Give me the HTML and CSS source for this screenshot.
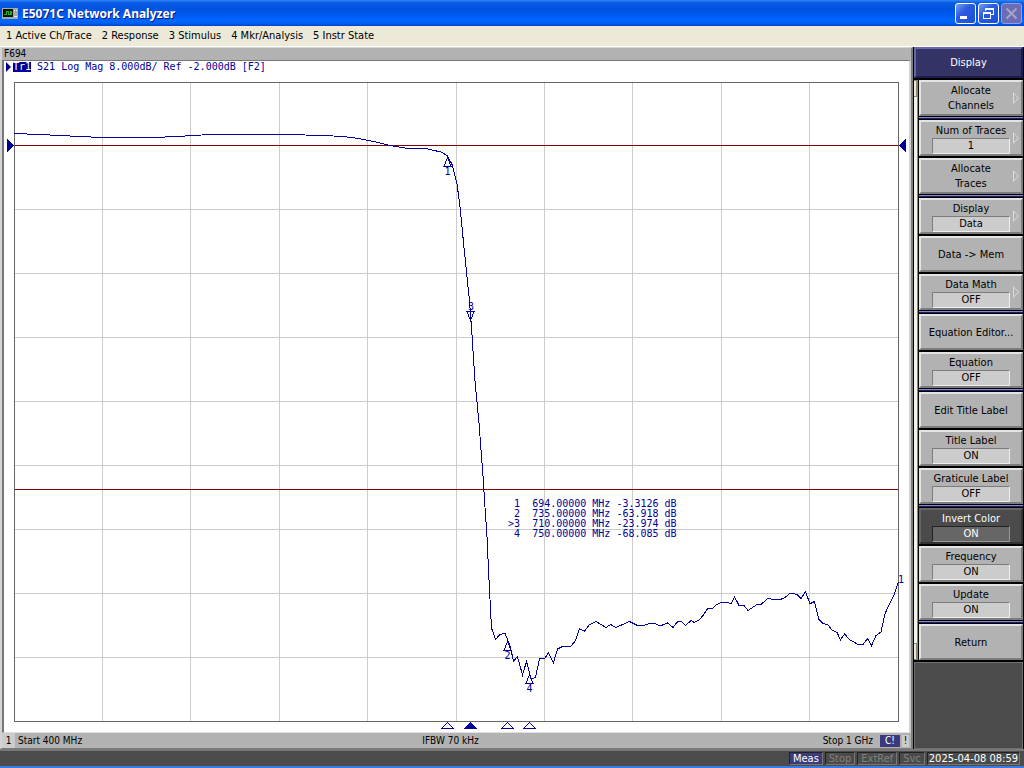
FILE: index.html
```
<!DOCTYPE html>
<html lang="en">
<head>
    <meta charset="UTF-8">
    <meta name="viewport" content="width=device-width, initial-scale=1.0">
    <title>E5071C Network Analyzer</title>
    <link rel="stylesheet" href="styles.css">
</head>
<body>
    <header class="titlebar">
        <svg class="app-icon" width="16" height="11" viewBox="0 0 16 11" shape-rendering="crispEdges">
            <rect width="16" height="11" fill="#a8a8a8"/>
            <rect x="1" y="1" width="10" height="8" fill="#001800"/>
            <path d="M2 6.500h2V3.500h2v3h2V3.500h1v3h1" fill="none" stroke="#1fae1f"/>
            <path d="M12 2.500h1M14 2.500h1M12 8.500h3" stroke="#eee"/>
        </svg>
        <h1>E5071C Network Analyzer</h1>
        <div class="window-buttons">
            <button type="button" aria-label="Minimize">
                <svg width="19" height="19" viewBox="0 0 19 19"><path d="M4 13.500h7" stroke="#fff" stroke-width="3"/></svg>
            </button>
            <button type="button" aria-label="Restore">
                <svg width="19" height="19" viewBox="0 0 19 19" fill="none" stroke="#fff" shape-rendering="crispEdges">
                    <path d="M6.500 7V4.500h8v6h-3M6 5.500h9M4.500 8.500h7v6h-7zM4 9.500h8"/>
                </svg>
            </button>
            <button type="button" aria-label="Close" disabled>
                <svg width="19" height="19" viewBox="0 0 19 19"><path d="M4.500 4.500l10 10M14.500 4.500l-10 10" stroke="#a9a3c4" stroke-width="2"/></svg>
            </button>
        </div>
    </header>

    <nav class="menubar">
        <button type="button">1 Active Ch/Trace</button>
        <button type="button">2 Response</button>
        <button type="button">3 Stimulus</button>
        <button type="button">4 Mkr/Analysis</button>
        <button type="button">5 Instr State</button>
    </nav>

    <main class="workspace">
        <section class="channel">
            <h2 class="channel-title">F694</h2>
            <div class="screen">
                <div class="trace-status">
                    <span class="arrow"></span><b>Tr1</b><span class="trace-text">S21 Log Mag 8.000dB/ Ref -2.000dB [F2]</span>
                </div>
                <div class="plot">
                    <svg class="graph" viewBox="4 73 905 659" shape-rendering="crispEdges">
                        <!-- graticule -->
                        <path class="grid" d="M102.500 83V721M190.500 83V721M279.500 83V721M367.500 83V721M456.500 83V721M544.500 83V721M632.500 83V721M721.500 83V721M809.500 83V721M15 209.500H898M15 273.500H898M15 337.500H898M15 401.500H898M15 465.500H898M15 529.500H898M15 593.500H898M15 657.500H898"/>
                        <rect class="frame" x="14.500" y="82.500" width="884" height="639"/>
                        <!-- reference and limit -->
                        <path class="level" d="M15 145.500H898M15 489.500H898"/>
                        <path class="fill" d="M7 139l7 6.500-7 6.500zM906 139l-7 6.500 7 6.500z"/>
                        <!-- S21 trace -->
                        <polyline class="trace" points="14,133.500 40,134.500 70,136 102,137.500 155,137.500 185,136 210,134.500 285,134.500 325,135.500 345,136.700 360,138.700 377,142.300 390,145.500 407,148.300 428,149 442,152.300 447.500,156 452,164.500 457,183.500 460.300,209.500 463.600,243.500 467,277 469.600,302 471.600,329 475,381 479,423 483.300,480 484.500,500 487,537 489,580 491.500,628 495.500,639.500 499.500,635 502.700,633.500 505,633.500 507.500,639.500 510.300,647 513.500,661 517.500,656.700 522.500,675 526.500,661.500 531,679 535.500,677.500 539.500,658.500 544.500,658.500 548.500,653 553.500,662.500 557.500,649 562.500,646.500 570.500,646.500 575.500,640.700 579.500,628.700 584.500,631.300 589,625 596,621.500 606,627.500 610.500,624.500 616,627.500 629.500,621.500 637.500,625.500 643.500,625.500 650,623.500 655,623.500 660,626 667.500,623 673,627.500 677.500,621.700 682,621.900 685.500,625.500 691,620.500 694.500,622.500 699,620 703.500,615 707.500,608.700 712.500,608.700 716,605 721,602.500 727.500,602.500 731,603.700 734.500,596.700 739,605.500 744,605.500 748,610.500 757,604.500 760.500,605 767.500,598.500 774,599.500 780.500,599.500 784.500,597.700 790,593.500 794.500,593.700 797,594.700 801,598.500 805.500,591.700 810,603.700 814.500,601.500 819,619.700 823,623.500 828,624.700 832,630 837,632.500 840.500,639.700 844.500,634 849.500,639.500 858,644.500 863,644.500 867.500,638.500 871.500,645.700 876,635.500 881,632 885,613.700 889.500,604 894,594.700 898.500,582"/>
                        <!-- markers -->
                        <path class="marker" d="M447.500 157.500l-3.500 9h7zM507.500 641.500l-3.500 9h7zM529.500 674.500l-3.500 9h7zM470.500 320.500l-3.500-9h7z"/>
                        <path class="marker" d="M441.500 728.500h12l-6-6zM501.500 728.500h12l-6-6zM523.500 728.500h12l-6-6z"/>
                        <path class="fill" d="M463.500 729h14l-7-7z"/>
                        <g class="marker-label">
                            <text x="447.500" y="175">1</text>
                            <text x="507.500" y="659">2</text>
                            <text x="471" y="310">3</text>
                            <text x="529.500" y="692">4</text>
                            <text x="901" y="583">1</text>
                        </g>
                    </svg>
                    <table class="marker-table">
                        <tr><td>&nbsp;1</td><td>694.00000 MHz</td><td>-3.3126 dB</td></tr>
                        <tr><td>&nbsp;2</td><td>735.00000 MHz</td><td>-63.918 dB</td></tr>
                        <tr><td>&gt;3</td><td>710.00000 MHz</td><td>-23.974 dB</td></tr>
                        <tr><td>&nbsp;4</td><td>750.00000 MHz</td><td>-68.085 dB</td></tr>
                    </table>
                </div>
            </div>
            <footer class="channel-footer">
                <span class="channel-no">1</span>
                <span class="start">Start 400 MHz</span>
                <span class="ifbw">IFBW 70 kHz</span>
                <span class="stop">Stop 1 GHz</span>
                <span class="flag flag-on">C!</span>
                <span class="flag">!</span>
            </footer>
        </section>

        <aside class="softkeys">
            <h2>Display</h2>
            <div class="keys">
                <div class="scroller"><span></span><span></span></div>
                <div class="key-list">
                    <div class="key-group">
                        <button type="button" class="more">Allocate<br>Channels</button>
                    </div>
                    <div class="key-group">
                        <button type="button" class="more">Num of Traces<output>1</output></button>
                        <button type="button" class="more">Allocate<br>Traces</button>
                    </div>
                    <div class="key-group">
                        <button type="button" class="more">Display<output>Data</output></button>
                        <button type="button">Data -&gt; Mem</button>
                        <button type="button" class="more">Data Math<output>OFF</output></button>
                    </div>
                    <div class="key-group">
                        <button type="button">Equation Editor...</button>
                        <button type="button">Equation<output>OFF</output></button>
                    </div>
                    <div class="key-group">
                        <button type="button">Edit Title Label</button>
                        <button type="button">Title Label<output>ON</output></button>
                        <button type="button">Graticule Label<output>OFF</output></button>
                    </div>
                    <div class="key-group">
                        <button type="button" class="active">Invert Color<output>ON</output></button>
                        <button type="button">Frequency<output>ON</output></button>
                        <button type="button">Update<output>ON</output></button>
                    </div>
                    <div class="key-group">
                        <button type="button">Return</button>
                    </div>
                </div>
            </div>
            <div class="softkeys-rest"></div>
        </aside>
    </main>

    <footer class="statusbar">
        <span class="on">Meas</span>
        <span>Stop</span>
        <span>ExtRef</span>
        <span>Svc</span>
        <time datetime="2025-04-08T08:59">2025-04-08 08:59</time>
    </footer>
</body>
</html>
```

FILE: styles.css
```
:root {
    --navy: #000099;
    --face: #b2b2b2;
    --face-light: #e4e4e4;
    --face-dark: #7c7c7c;
    --panel: #4b4b4b;
    --accent: #333366;
}

*,
*::before,
*::after {
    box-sizing: border-box;
}

body {
    margin: 0;
    min-height: 100vh;
    display: flex;
    flex-direction: column;
    background: #000;
    color: #000;
    font-family: "DejaVu Sans Condensed", "DejaVu Sans", sans-serif;
    font-stretch: condensed;
    font-size: 11px;
    line-height: 15px;
}

h1, h2 {
    margin: 0;
    font-size: inherit;
    font-weight: normal;
}

button {
    font: inherit;
    color: inherit;
    padding: 0;
    border: none;
    background: none;
}

/* title bar */
.titlebar {
    display: flex;
    align-items: center;
    height: 26px;
    padding: 0 2px;
    background: linear-gradient(#2c86f4 0, #0a5be6 3px, #0053e1 9px, #0058ee 14px, #0066ff 20px, #0062f4 23px, #0043c8 26px);
}

.titlebar h1 {
    flex: 1;
    margin-left: 4px;
    color: #fff;
    font-family: "Noto Sans", sans-serif;
    font-stretch: normal;
    font-size: 12px;
    font-weight: bold;
    text-shadow: 1px 1px #0a1883;
}

.window-buttons {
    display: flex;
    gap: 2px;
}

.window-buttons button {
    width: 21px;
    height: 21px;
    border: 1px solid #fff;
    border-radius: 3px;
    background: linear-gradient(135deg, #7d9df0, #2a5be0 40%, #1c4fd8);
}

.window-buttons button:disabled {
    border-color: #8f9fe0;
    background: #6b6cb5;
}

.window-buttons svg {
    display: block;
}

/* menu */
.menubar {
    display: flex;
    gap: 10px;
    height: 20px;
    padding: 0 6px 2px;
    background: #ece9d8;
}

/* main area */
.workspace {
    flex: 1;
    display: flex;
    border-top: 1px solid #fff;
}

.channel {
    flex: 1;
    min-width: 0;
    display: flex;
    flex-direction: column;
    border: 2px solid #d4d4d4;
    border-right-color: #7c7c7c;
    border-bottom-color: #7c7c7c;
    border-width: 1px 2px 1px 2px;
    background: var(--face);
}

.channel-title {
    height: 12px;
    padding-left: 2px;
    font-size: 10px;
    line-height: 12px;
}

.screen {
    flex: 1;
    border: 1px solid #777;
    border-width: 1px 2px 1px 2px;
    border-right-color: #d0d0d0;
    border-bottom-color: #e0e0e0;
    background: #fff;
    color: var(--navy);
    font-family: "DejaVu Sans Mono", monospace;
    font-stretch: normal;
    font-size: 10px;
    line-height: 10px;
}

.trace-status {
    display: flex;
    height: 12px;
    padding: 1px 2px 0;
}

.trace-status b {
    height: 10px;
    margin-left: 2px;
    background: var(--navy);
    color: #fff;
    font-weight: normal;
}

.trace-text {
    margin-left: 6px;
}

.arrow {
    border: 5px solid transparent;
    border-left-color: var(--navy);
    border-right-width: 0;
    height: 10px;
}

.plot {
    position: relative;
}

.graph {
    display: block;
    width: 100%;
}

.grid,
.frame,
.level,
.trace,
.marker {
    fill: none;
    stroke: var(--navy);
}

.grid {
    stroke: #cccccc;
}

.frame {
    stroke: #666666;
}

.level {
    stroke: #880000;
}

.fill,
.marker-label {
    fill: var(--navy);
}

.marker-label {
    text-anchor: middle;
}

.marker-table {
    position: absolute;
    left: 55.7%;
    top: 64.6%;
    border-collapse: collapse;
}

.marker-table td {
    padding: 0 6px 0 0;
    white-space: nowrap;
}

.marker-table td:first-child {
    padding-right: 12px;
}

.channel-footer {
    display: flex;
    align-items: center;
    height: 15px;
    padding-right: 2px;
    font-size: 10px;
    line-height: 15px;
}

.channel-no {
    width: 13px;
    background: #cccccc;
    text-align: center;
}

.start,
.stop {
    flex: 1;
    padding: 0 3px;
}

.start {
    margin-right: 10px;
}

.stop {
    padding-right: 7px;
    text-align: right;
}

.flag {
    width: 7px;
    line-height: 12px;
    background: #cccccc;
    text-align: center;
}

.flag-on {
    width: 20px;
    margin-right: 2px;
    background: #3b3b7c;
    color: #fff;
}

/* softkey menu */
.softkeys {
    flex: none;
    width: 111px;
    display: flex;
    flex-direction: column;
    padding: 0 1px 0 1px;
}

.softkeys h2 {
    height: 31px;
    border: 2px solid #6868a8;
    border-right-color: #1c1c48;
    border-bottom-color: #1c1c48;
    background: var(--accent);
    color: #fff;
    line-height: 27px;
    text-align: center;
}

.keys {
    display: flex;
    padding-top: 2px;
}

.scroller {
    width: 4px;
    display: flex;
    flex-direction: column;
    justify-content: space-between;
    margin-right: 1px;
    border-right: 1px solid #8c8878;
    background: #f4f2e4;
}

.scroller span {
    height: 17px;
    border: 1px solid #8c8878;
    border-left: none;
    background: #ece9d8;
}

.key-list {
    flex: 1;
}

.key-group {
    display: flex;
    flex-direction: column;
    gap: 2px;
}

.key-group + .key-group::before {
    content: "";
    height: 4px;
    margin-bottom: -2px;
    border-top: 1px solid #000;
    border-bottom: 1px solid #000;
    background: linear-gradient(#8888cc 1px, #1c1c66 1px);
}

.key-group button {
    position: relative;
    display: flex;
    flex-direction: column;
    align-items: center;
    justify-content: center;
    height: 36px;
    border: 2px solid var(--face-light);
    border-right-color: var(--face-dark);
    border-bottom-color: var(--face-dark);
    background: var(--face);
}

.key-group output {
    width: 78px;
    height: 16px;
    border: 1px solid #7c7c7c;
    border-right-color: #eee;
    border-bottom-color: #eee;
    background: #cccccc;
    line-height: 14px;
}

.key-group .active {
    border-color: #666 #333 #333 #666;
    background: var(--panel);
    color: #fff;
}

.active output {
    border-color: #222 #999 #999 #222;
    background: #666;
}

/* submenu arrow */
.more::after {
    content: "";
    position: absolute;
    right: 2px;
    top: 50%;
    width: 6px;
    height: 12px;
    margin-top: -6px;
    background: #dcdcdc;
    clip-path: polygon(0 0, 100% 50%, 0 100%, 0 0, 1px 2px, 1px 10px, 5px 6px, 1px 2px);
}

.softkeys-rest {
    flex: 1;
    margin-top: 2px;
    border: 1px solid #707070;
    background: var(--panel);
}

/* status bar */
.statusbar {
    display: flex;
    justify-content: flex-end;
    gap: 2px;
    height: 19px;
    padding: 1px 4px;
    border-top: 2px solid #777;
    border-bottom: 2px solid #3a7be0;
    background: var(--panel);
    color: #808080;
}

.statusbar span,
.statusbar time {
    height: 13px;
    padding: 0 3px;
    border: 1px solid #222;
    border-right-color: #777;
    border-bottom-color: #777;
    line-height: 11px;
}

.statusbar .on {
    background: #3b3b7c;
    color: #fff;
}

.statusbar time {
    padding: 0 1px;
    color: #fff;
}
```
